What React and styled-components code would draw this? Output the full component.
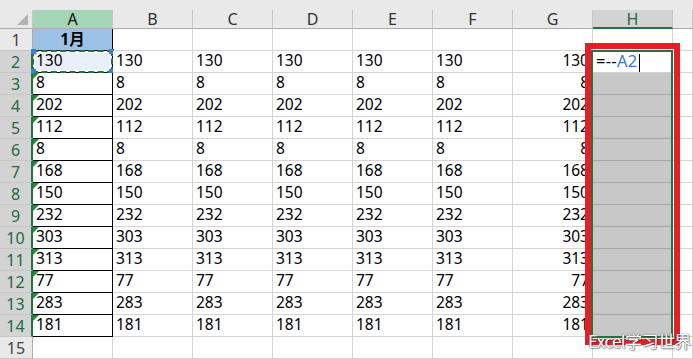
import React from "react";
import styled, { createGlobalStyle, css } from "styled-components";

const GlobalStyle = createGlobalStyle`
  html, body { margin: 0; padding: 0; background: #fff; }
  body {
    width: 693px;
    height: 359px;
    overflow: hidden;
    font-family: "Noto Sans", "Noto Sans CJK SC", sans-serif;
  }
`;

const values = ["130", "8", "202", "112", "8", "168", "150", "232", "303", "313", "77", "283", "181"];
const letters = ["A", "B", "C", "D", "E", "F", "G", "H", ""];

const Page = styled.div`
  position: relative;
  width: 693px;
  height: 359px;
  overflow: hidden;
`;

const TopStrip = styled.div`
  height: 10px;
  background: #e9e9e9;
`;

const Sheet = styled.div`
  display: grid;
  grid-template-columns: 33px repeat(8, 80px) 20px;
  grid-template-rows: 19px repeat(15, 22px);
`;

const Corner = styled.div`
  position: relative;
  background: #e9e9e9;
  border-right: 1px solid #c6c6c6;
  border-bottom: 1px solid #ababab;
  box-sizing: border-box;
  &::after {
    content: "";
    position: absolute;
    right: 4px;
    bottom: 3px;
    border-left: 11px solid transparent;
    border-bottom: 11px solid #b4b4b4;
  }
`;

const ColHead = styled.div`
  display: flex;
  align-items: center;
  justify-content: center;
  box-sizing: border-box;
  font-size: 16px;
  line-height: 16px;
  color: #333;
  background: #e9e9e9;
  border-right: 1px solid #c6c6c6;
  border-bottom: 1px solid #ababab;
  ${(p) =>
    p.$ref &&
    css`
      background: #a2d6b6;
      color: #111;
    `}
  ${(p) =>
    p.$active &&
    css`
      background: #d3d3d3;
      color: #1e6b40;
      border-bottom: 2px solid #217346;
    `}
`;

const RowHead = styled.div`
  display: flex;
  align-items: center;
  justify-content: center;
  box-sizing: border-box;
  font-size: 16px;
  line-height: 18px;
  color: #444;
  background: #e9e9e9;
  border-right: 1px solid #ababab;
  border-bottom: 1px solid #c6c6c6;
  ${(p) =>
    p.$active &&
    css`
      background: #d3d3d3;
      color: #1e6b40;
      border-right: 2px solid #217346;
    `}
`;

const Cell = styled.div`
  position: relative;
  display: flex;
  align-items: ${(p) => (p.$bold ? "center" : "flex-end")};
  justify-content: ${(p) => (p.$align === "right" ? "flex-end" : p.$align === "center" ? "center" : "flex-start")};
  padding: 0 3px ${(p) => (p.$bold ? "0" : "2px")};
  box-sizing: border-box;
  font-size: 15.5px;
  line-height: ${(p) => (p.$bold ? "17px" : "19px")};
  color: #000;
  background: ${(p) => p.$fill || "#fff"};
  border-right: 1px solid ${(p) => (p.$boxed ? "#000" : p.$grey ? "#a6a6a6" : "#d4d4d4")};
  border-bottom: 1px solid ${(p) => (p.$boxed ? "#000" : p.$grey ? "#a6a6a6" : "#d4d4d4")};
  font-weight: ${(p) => (p.$bold ? 700 : 400)};
  white-space: nowrap;
  ${(p) =>
    p.$mark &&
    css`
      &::before {
        content: "";
        position: absolute;
        left: 0;
        top: 0;
        border-top: 6px solid #1e8c3a;
        border-right: 6px solid transparent;
      }
    `}
`;

const RefBox = styled.span`
  position: absolute;
  left: -1px;
  top: -1px;
  right: -1px;
  bottom: -1px;
  border: 2px dashed #217346;
  outline: 1px solid #fff;
  outline-offset: -3px;
  pointer-events: none;
`;

const Handle = styled.span`
  position: absolute;
  width: 5px;
  height: 5px;
  background: #3f7fd6;
  ${(p) => (p.$x === "l" ? "left: -3px;" : "right: -3px;")}
  ${(p) => (p.$y === "t" ? "top: -3px;" : "bottom: -3px;")}
`;

const Formula = styled.span`
  font-size: 16.5px;
  letter-spacing: 0.3px;
`;

const Blue = styled.span`
  color: #3b78d4;
`;

const Caret = styled.span`
  display: inline-block;
  width: 1px;
  height: 18px;
  margin-left: 1px;
  margin-bottom: -2px;
  background: #000;
`;

const Selection = styled.div`
  position: absolute;
  left: 591px;
  top: 50px;
  width: 82px;
  height: 288px;
  box-sizing: border-box;
  border: 2px solid #217346;
  pointer-events: none;
`;

const Highlight = styled.div`
  position: absolute;
  left: 585px;
  top: 43px;
  width: 95px;
  height: 302px;
  box-sizing: border-box;
  border: 6px solid #e81d25;
  pointer-events: none;
`;

const Watermark = styled.div`
  position: absolute;
  left: 588px;
  top: 328px;
  font-family: "Noto Sans CJK SC", "Noto Sans", sans-serif;
  font-size: 17px;
  font-weight: 400;
  color: #fff;
  letter-spacing: -0.6px;
  text-shadow: 0 0 1px #555, 0 0 1px #555, 1px 1px 1px rgba(0, 0, 0, 0.35);
  white-space: nowrap;
`;

function Row({ n }) {
  const v = n >= 2 && n <= 14 ? values[n - 2] : null;
  const active = n >= 2 && n <= 14;
  return (
    <>
      <RowHead $active={active}>{n}</RowHead>
      {n === 1 ? (
        <Cell $boxed $fill="#9bc2e6" $align="center" $bold>
          1月
        </Cell>
      ) : n <= 14 ? (
        <Cell $boxed $mark $fill={n === 2 ? "#e9f0f9" : undefined}>
          {v}
          {n === 2 && (
            <RefBox>
              <Handle $x="l" $y="t" />
              <Handle $x="r" $y="t" />
              <Handle $x="l" $y="b" />
              <Handle $x="r" $y="b" />
            </RefBox>
          )}
        </Cell>
      ) : (
        <Cell />
      )}
      {["B", "C", "D", "E", "F"].map((c) => (
        <Cell key={c}>{v}</Cell>
      ))}
      <Cell $align="right">{v}</Cell>
      {n === 2 ? (
        <Cell>
          <Formula>
            =--<Blue>A2</Blue>
          </Formula>
          <Caret />
        </Cell>
      ) : n >= 3 && n <= 14 ? (
        <Cell $fill="#c8c8c8" $grey />
      ) : (
        <Cell />
      )}
      <Cell />
    </>
  );
}

export default function App() {
  return (
    <Page>
      <GlobalStyle />
      <TopStrip />
      <Sheet>
        <Corner />
        {letters.map((l, i) => (
          <ColHead key={i} $ref={l === "A"} $active={l === "H"}>
            {l}
          </ColHead>
        ))}
        {Array.from({ length: 15 }, (_, i) => (
          <Row key={i} n={i + 1} />
        ))}
      </Sheet>
      <Selection />
      <Highlight />
      <Watermark>Excel学习世界</Watermark>
    </Page>
  );
}
